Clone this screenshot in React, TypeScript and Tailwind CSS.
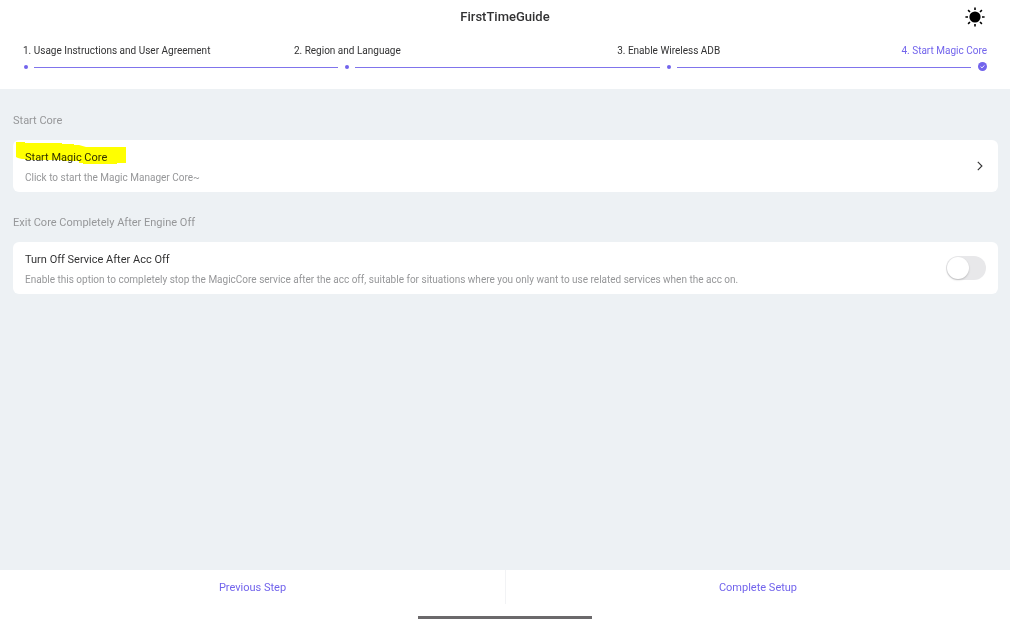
import { useState } from 'react';
import clsx from 'clsx';

const steps = [
  '1. Usage Instructions and User Agreement',
  '2. Region and Language',
  '3. Enable Wireless ADB',
  '4. Start Magic Core',
];

function SunIcon() {
  return (
    <svg viewBox="0 0 20 20" className="h-5 w-5" fill="none" stroke="#000" strokeWidth="1.6">
      <circle cx="10" cy="10" r="5.6" fill="#000" stroke="none" />
      <path d="M10 .4v2.6M10 17v2.6M.4 10H3M17 10h2.6M3.1 3.1l1.9 1.9M15 15l1.9 1.9M3.1 16.9L5 15M15 5l1.9-1.9" />
    </svg>
  );
}

function StepDone() {
  return (
    <svg viewBox="0 0 10 10" className="h-[9px] w-[9px]" fill="none">
      <circle cx="5" cy="5" r="5" fill="#7264ec" />
      <path d="M2.9 5.1l1.5 1.4 2.8-2.7" stroke="#fff" strokeWidth="1" />
    </svg>
  );
}

function Highlight() {
  return (
    <svg
      viewBox="0 0 110 22"
      className="pointer-events-none absolute left-[3px] top-[2px] h-[22px] w-[110px] mix-blend-multiply"
      fill="#ffff00"
    >
      <path d="M0 0h9v1h37v1h12v1h5l7 2h40v16h-9v1H67v-1h-4v-2H46v-1H9v-1H6l-4-1-2-1z" />
    </svg>
  );
}

function Steps() {
  return (
    <ol className="flex px-[23px] pt-[9px] text-[10px] leading-4 text-[#323233]">
      {steps.map((step, i) => {
        const first = i === 0;
        const last = i === steps.length - 1;
        return (
          <li
            key={step}
            aria-current={last ? 'step' : undefined}
            className={clsx('flex flex-col gap-[3px]', last ? 'w-0 items-end text-[#7264ec]' : 'flex-1')}
          >
            <div className={clsx('flex w-[6px] whitespace-nowrap', last ? 'justify-end' : !first && 'justify-center')}>
              <span>{step}</span>
            </div>
            <div className="flex h-[10px] w-full items-center justify-end">
              {last ? (
                <span className="shrink-0 self-start">
                  <StepDone />
                </span>
              ) : (
                <>
                  <span className="ml-px h-1 w-1 shrink-0 rounded-full bg-[#7264ec]" />
                  <span className={clsx('ml-[6px] h-px flex-1 bg-[#8074ec]', i === 2 ? 'mr-4' : 'mr-[6px]')} />
                </>
              )}
            </div>
          </li>
        );
      })}
    </ol>
  );
}

export default function App() {
  const [turnOff, setTurnOff] = useState(false);

  return (
    <div className="flex min-h-screen flex-col bg-[#edf1f4] font-[Roboto,sans-serif] text-[11px] leading-4 text-[#323233]">
      <header className="bg-white pb-[17px]">
        <div className="grid h-[34px] grid-cols-3 items-center">
          <h1 className="col-start-2 text-center text-[13px] font-medium">FirstTimeGuide</h1>
          <button type="button" aria-label="Toggle theme" className="mr-[25px] justify-self-end">
            <SunIcon />
          </button>
        </div>
        <Steps />
      </header>

      <main className="flex-1 pl-[13px] pr-3 pt-6">
        <section>
          <h2 className="text-[#969799]">Start Core</h2>
          <button
            type="button"
            className="relative mt-[11px] flex h-[52px] w-full items-center justify-between rounded-md bg-white px-3 text-left"
          >
            <span className="flex flex-col gap-1 pt-[3px]">
              <span>Start Magic Core</span>
              <span className="text-[10px] text-[#969799]">Click to start the Magic Manager Core~</span>
            </span>
            <svg viewBox="0 0 6 10" className="mr-[3px] h-[10px] w-[6px]" fill="none" stroke="#323233" strokeWidth="1.1">
              <path d="M.8 .9L4.9 5 .8 9.1" />
            </svg>
            <Highlight />
          </button>
        </section>

        <section className="mt-[23px]">
          <h2 className="text-[#969799]">Exit Core Completely After Engine Off</h2>
          <label className="mt-[11px] flex h-[52px] items-center justify-between rounded-md bg-white px-3">
            <span className="flex flex-col gap-1 pt-[3px]">
              <span>Turn Off Service After Acc Off</span>
              <span className="text-[10px] text-[#969799]">
                Enable this option to completely stop the MagicCore service after the acc off, suitable for situations
                where you only want to use related services when the acc on.
              </span>
            </span>
            <input
              type="checkbox"
              role="switch"
              checked={turnOff}
              onChange={(e) => setTurnOff(e.target.checked)}
              className="flex h-6 w-10 shrink-0 appearance-none items-center rounded-full bg-[#e8e8ea] px-px before:h-[22px] before:w-[22px] before:rounded-full before:bg-white before:shadow-[0_1px_2px_rgba(0,0,0,0.2)] checked:justify-end checked:bg-[#7264ec]"
            />
          </label>
        </section>
      </main>

      <footer className="bg-white pb-[10px]">
        <nav className="grid grid-cols-2 text-[#7264ec]">
          <button type="button" className="h-[34px] pt-px">
            Previous Step
          </button>
          <button type="button" className="h-[34px] border-l border-[#f2f3f5] pt-px">
            Complete Setup
          </button>
        </nav>
        <div className="mx-auto mt-3 h-[3px] w-[174px] bg-[#6b696b]" />
      </footer>
    </div>
  );
}
